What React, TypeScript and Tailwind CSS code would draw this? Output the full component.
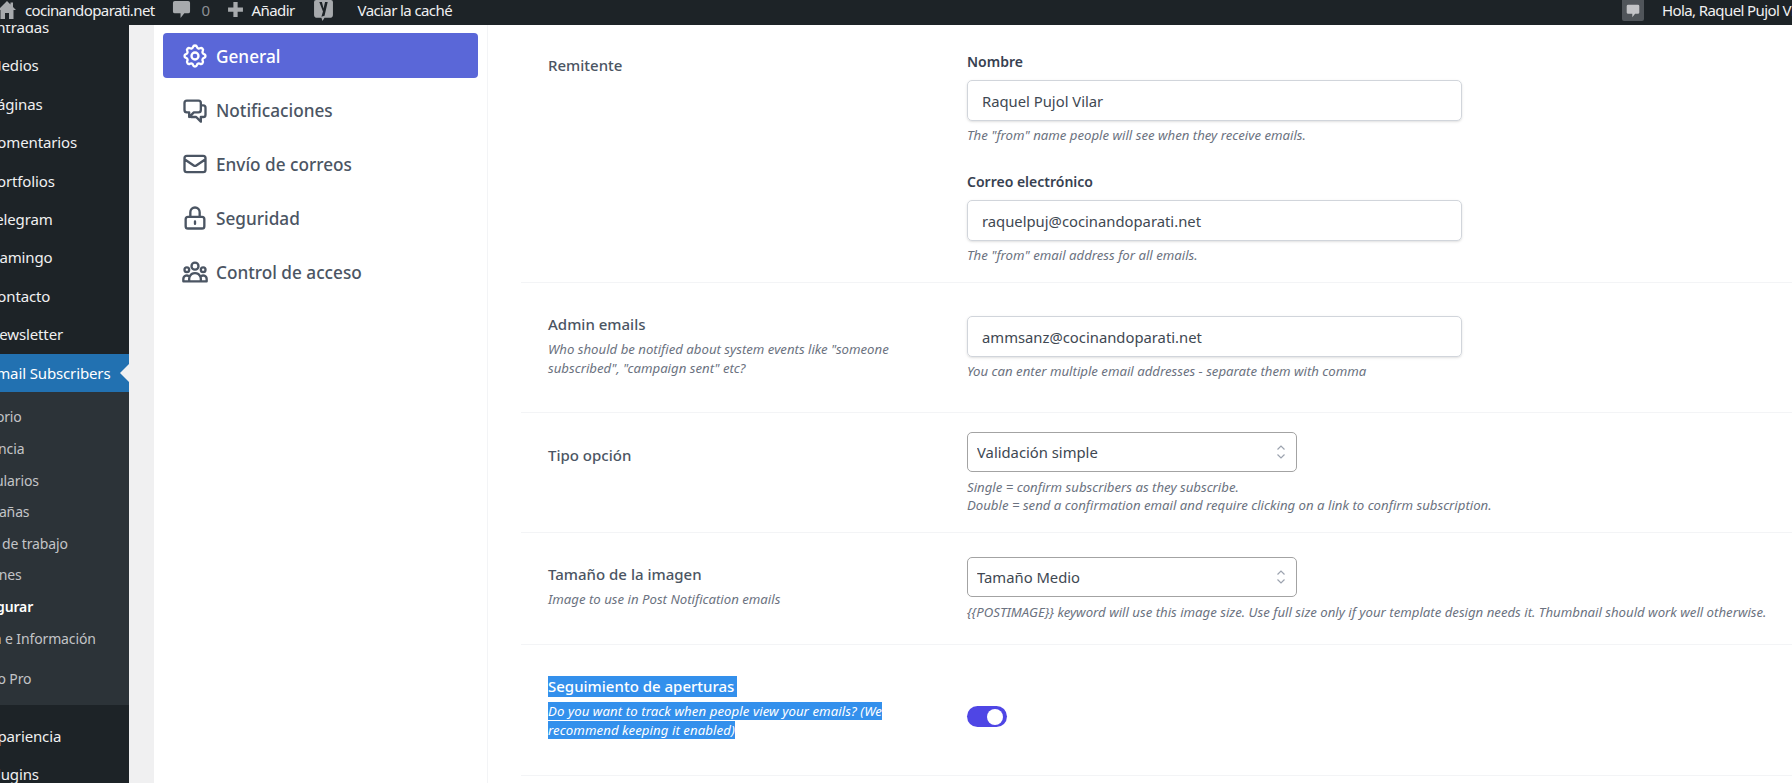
import React from 'react';
import { HiOutlineCog, HiOutlineChatAlt2, HiOutlineMail, HiOutlineLockClosed, HiOutlineUserGroup } from 'react-icons/hi';
import type { IconType } from 'react-icons';

const MAIN_TOP = ['Entradas', 'Medios', 'Páginas', 'Comentarios', 'Portfolios', 'Telegram', 'Flamingo', 'Contacto', 'Newsletter'];
const SUB = ['Escritorio', 'Audiencia', 'Formularios', 'Campañas', 'Flujos de trabajo', 'Opciones', 'Configurar', 'Ayuda e Información'];
const NAV: { label: string; icon: IconType }[] = [
  { label: 'General', icon: HiOutlineCog },
  { label: 'Notificaciones', icon: HiOutlineChatAlt2 },
  { label: 'Envío de correos', icon: HiOutlineMail },
  { label: 'Seguridad', icon: HiOutlineLockClosed },
  { label: 'Control de acceso', icon: HiOutlineUserGroup },
];

const Bubble: React.FC<{ className?: string }> = ({ className }) => (
  <svg viewBox="0 0 20 20" className={className} fill="currentColor">
    <path d="M3 1h14a2 2 0 0 1 2 2v9a2 2 0 0 1-2 2h-4l-4 5v-5H3a2 2 0 0 1-2-2V3a2 2 0 0 1 2-2z" />
  </svg>
);

const TopBar: React.FC = () => (
  <header className="h-[25px] shrink-0 bg-[#1d2327] flex items-center text-[15px] tracking-[-0.6px] text-[#f0f0f1] overflow-hidden whitespace-nowrap relative z-10">
    <svg viewBox="0 0 20 20" className="w-[20px] h-[20px] -ml-[3px] -mt-[6px] text-[#a7aaad]" fill="currentColor">
      <path d="M10 1 1 10h2.500v9H8v-6h4v6h4.500v-9H19l-3-3V2.500h-2.500V4.500z" />
    </svg>
    <span className="ml-[8px] -mt-[5px]">cocinandoparati.net</span>
    <Bubble className="w-[19px] h-[19px] ml-[17px] -mt-[7px] text-[#a7aaad]" />
    <span className="ml-[11px] -mt-[5px] text-[#8c8f94]">0</span>
    <svg viewBox="0 0 16 16" className="w-[17px] h-[17px] ml-[17px] -mt-[7px] text-[#a7aaad]" fill="currentColor">
      <path d="M6 1h4v5h5v4h-5v5H6v-5H1V6h5z" />
    </svg>
    <span className="ml-[8px] -mt-[5px]">Añadir</span>
    <svg viewBox="0 0 20 20" className="w-[21px] h-[21px] ml-[18px] -mt-[4px] text-[#a7aaad]" fill="currentColor">
      <path d="M3 0h14a2 2 0 0 1 2 2v12a3 3 0 0 1-3 3h-5l-2 3-1-3H4a3 3 0 0 1-3-3V2a2 2 0 0 1 2-2z" />
      <path d="M6 2 9.500 11 8 16l3-1 3-13-2.500 0L10 8 8.500 2z" fill="#1d2327" />
    </svg>
    <span className="ml-[24px] -mt-[5px]">Vaciar la caché</span>
    <div className="ml-auto flex items-center">
      <div className="w-[22px] h-[25px] -mt-[8px] bg-[#50555a] rounded-b-[2px] flex items-end justify-center pb-[3px]">
        <Bubble className="w-[14px] h-[14px] text-[#c3c4c7]" />
      </div>
      <span className="w-[130px] ml-[18px] -mt-[5px]">Hola, Raquel Pujol Vilar</span>
    </div>
  </header>
);

const Sidebar: React.FC = () => (
  <aside className="w-[129px] shrink-0 bg-[#1d2327] overflow-hidden whitespace-nowrap text-[15px] tracking-[-0.13px] text-[#f0f0f1]">
    <ul className="-mt-[17px]">
      {MAIN_TOP.map(item => (
        <li key={item} className="h-[38.4px] flex items-center -ml-[12px]">{item}</li>
      ))}
      <li className="h-[38.600px] bg-[#2271b1] flex items-center text-white relative">
        <span className="-ml-[12px]">Email Subscribers</span>
        <span className="absolute right-0 top-[10px] border-y-[9px] border-y-transparent border-r-[9px] border-r-[#f0f0f1]" />
      </li>
    </ul>
    <ul className="bg-[#2c3338] h-[313px] pt-[9px] text-[14px] text-[#c3c4c7]">
      {SUB.map(item => (
        <li key={item} className={`h-[31.6px] flex items-center -ml-[39px] ${item === 'Configurar' ? 'font-semibold text-white' : ''}`}>{item}</li>
      ))}
      <li className="h-[31.6px] mt-[9px] flex items-center -ml-[39px]">Diseño Pro</li>
    </ul>
    <ul className="mt-[12px]">
      {['Apariencia', 'Plugins'].map(item => (
        <li key={item} className="h-[38.4px] flex items-center -ml-[12px]">{item}</li>
      ))}
    </ul>
  </aside>
);

const SettingsNav: React.FC = () => (
  <nav className="w-[334px] shrink-0 bg-white border-r border-[#f3f4f6] pt-[8px] pl-[9px] pr-[9px] flex flex-col gap-[9px]">
    {NAV.map(({ label, icon: Icon }, i) => (
      <a
        key={label}
        className={`h-[45px] rounded-[4px] flex items-center gap-[7px] pl-[18px] text-[17.2px] font-medium ${
          i === 0 ? 'bg-[#5a67d8] text-white' : 'text-[#4b5563]'
        }`}
      >
        <Icon className="w-[28px] h-[28px] shrink-0" />
        <span className="mt-[2px]">{label}</span>
      </a>
    ))}
  </nav>
);

const Label: React.FC<{ children: React.ReactNode }> = ({ children }) => (
  <h3 className="text-[15px] leading-[22px] font-medium text-[#4b5563]">{children}</h3>
);

const Hint: React.FC<{ children: React.ReactNode; className?: string }> = ({ children, className }) => (
  <p className={`text-[13.2px] leading-[18px] italic text-[#6b7280] ${className ?? ''}`}>{children}</p>
);

const TextInput: React.FC<{ value: string; className?: string }> = ({ value, className }) => (
  <input
    readOnly
    value={value}
    className={`block w-[495px] h-[41px] px-[14px] rounded-[5px] border border-[#d1d5db] text-[14.8px] text-[#404852] shadow-sm ${className ?? ''}`}
  />
);

const SelectBox: React.FC<{ value: string }> = ({ value }) => (
  <div className="relative w-[330px] h-[40px]">
    <select className="appearance-none w-full h-full pl-[9px] rounded-[5px] border border-[#a3a3a3] text-[14.8px] text-[#404852] bg-white" defaultValue={value}>
      <option>{value}</option>
    </select>
    <svg viewBox="0 0 20 20" className="absolute right-[6px] top-[10px] w-[20px] h-[20px] text-[#9ca3af]" fill="none" stroke="currentColor" strokeWidth="1.200">
      <path d="m6.500 7.500 3.500-3.500 3.500 3.500M6.500 12.500l3.500 3.500 3.500-3.500" />
    </svg>
  </div>
);

const Row: React.FC<{ left: React.ReactNode; right: React.ReactNode; leftPad: string; rightPad: string }> = ({ left, right, leftPad, rightPad }) => (
  <section className="flex border-b border-[#f3f4f6] pl-[27px]">
    <div className={`w-[419px] shrink-0 ${leftPad}`}>{left}</div>
    <div className={`flex-1 ${rightPad}`}>{right}</div>
  </section>
);

const App: React.FC = () => (
  <div className="w-[1792px] h-[783px] overflow-hidden flex flex-col bg-white font-['Noto_Sans',sans-serif]">
    <TopBar />
    <div className="flex-1 flex min-h-0">
      <Sidebar />
      <div className="w-[25px] shrink-0 bg-[#f0f0f1]" />
      <SettingsNav />
      <main className="flex-1 pl-[33px] overflow-hidden">
        <Row
          leftPad="pt-[29px]"
          rightPad="pt-[27px] pb-[18px]"
          left={<Label>Remitente</Label>}
          right={
            <>
              <label className="block text-[14px] leading-[20px] font-semibold text-[#374151]">Nombre</label>
              <TextInput value="Raquel Pujol Vilar" className="mt-[8px]" />
              <Hint className="mt-[5px]">The "from" name people will see when they receive emails.</Hint>
              <label className="block mt-[28px] text-[14px] leading-[20px] font-semibold text-[#374151]">Correo electrónico</label>
              <TextInput value="raquelpuj@cocinandoparati.net" className="mt-[8px]" />
              <Hint className="mt-[5px]">The "from" email address for all emails.</Hint>
            </>
          }
        />
        <Row
          leftPad="pt-[30px]"
          rightPad="pt-[33px] pb-[32px]"
          left={
            <>
              <Label>Admin emails</Label>
              <Hint className="mt-[5px] w-[360px] !leading-[19px]">Who should be notified about system events like "someone subscribed", "campaign sent" etc?</Hint>
            </>
          }
          right={
            <>
              <TextInput value="ammsanz@cocinandoparati.net" />
              <Hint className="mt-[5px]">You can enter multiple email addresses - separate them with comma</Hint>
            </>
          }
        />
        <Row
          leftPad="pt-[31px]"
          rightPad="pt-[19px] pb-[18px]"
          left={<Label>Tipo opción</Label>}
          right={
            <>
              <SelectBox value="Validación simple" />
              <Hint className="mt-[6px]">
                Single = confirm subscribers as they subscribe.
                <br />
                Double = send a confirmation email and require clicking on a link to confirm subscription.
              </Hint>
            </>
          }
        />
        <Row
          leftPad="pt-[30px]"
          rightPad="pt-[24px] pb-[23px]"
          left={
            <>
              <Label>Tamaño de la imagen</Label>
              <Hint className="mt-[5px]">Image to use in Post Notification emails</Hint>
            </>
          }
          right={
            <>
              <SelectBox value="Tamaño Medio" />
              <Hint className="mt-[6px] whitespace-nowrap">{'{{POSTIMAGE}}'} keyword will use this image size. Use full size only if your template design needs it. Thumbnail should work well otherwise.</Hint>
            </>
          }
        />
        <Row
          leftPad="pt-[31px] pb-[36px]"
          rightPad="pt-[61px]"
          left={
            <>
              <h3 className="text-[15px] leading-[21px] font-medium text-white">
                <span className="bg-[#3390ec] inline-block pr-[3px]">Seguimiento de aperturas</span>
              </h3>
              <p className="mt-[5px] w-[360px] text-[13.2px] leading-[18.5px] tracking-[0.08px] italic text-white">
                <span className="bg-[#3390ec] [box-decoration-break:clone]">
                  Do you want to track when people view your emails? (We
                  <br />
                  recommend keeping it enabled)
                </span>
              </p>
            </>
          }
          right={
            <div className="w-[40px] h-[21px] rounded-full bg-[#4f46e5] flex items-center justify-end pr-[4px]">
              <span className="w-[16px] h-[16px] rounded-full bg-white" />
            </div>
          }
        />
      </main>
    </div>
  </div>
);

export default App;
